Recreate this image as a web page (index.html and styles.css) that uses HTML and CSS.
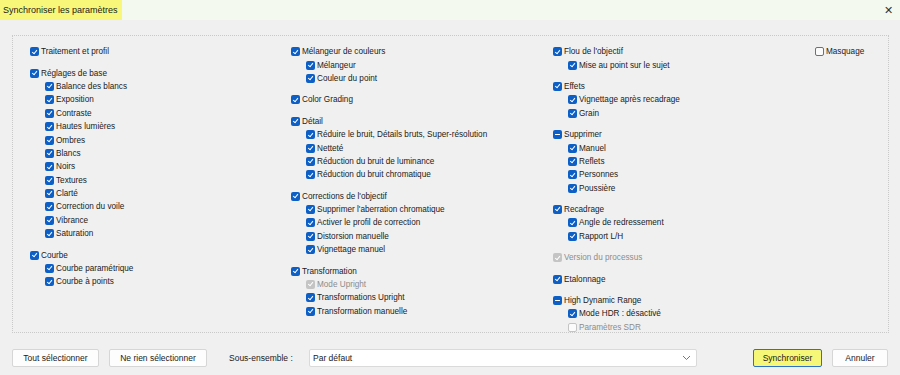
FILE: index.html
```html
<html>

<head>
    <meta http-equiv="Content-Type" content="text/html; charset=UTF-8">
    <link rel="stylesheet" href="styles.css">
</head>

<body>
    <header class="titleBar">
        <span class="title">Synchroniser les paramètres</span>
        <span class="close">&#x2715;</span>
    </header>

    <div class="panel">
        <div class="column">
            <div class="group">
                <div class="item"><span class="box on"></span>Traitement et profil</div>
            </div>
            <div class="group">
                <div class="item"><span class="box on"></span>Réglages de base</div>
                <div class="item sub"><span class="box on"></span>Balance des blancs</div>
                <div class="item sub"><span class="box on"></span>Exposition</div>
                <div class="item sub"><span class="box on"></span>Contraste</div>
                <div class="item sub"><span class="box on"></span>Hautes lumières</div>
                <div class="item sub"><span class="box on"></span>Ombres</div>
                <div class="item sub"><span class="box on"></span>Blancs</div>
                <div class="item sub"><span class="box on"></span>Noirs</div>
                <div class="item sub"><span class="box on"></span>Textures</div>
                <div class="item sub"><span class="box on"></span>Clarté</div>
                <div class="item sub"><span class="box on"></span>Correction du voile</div>
                <div class="item sub"><span class="box on"></span>Vibrance</div>
                <div class="item sub"><span class="box on"></span>Saturation</div>
            </div>
            <div class="group">
                <div class="item"><span class="box on"></span>Courbe</div>
                <div class="item sub"><span class="box on"></span>Courbe paramétrique</div>
                <div class="item sub"><span class="box on"></span>Courbe à points</div>
            </div>
        </div>

        <div class="column">
            <div class="group">
                <div class="item"><span class="box on"></span>Mélangeur de couleurs</div>
                <div class="item sub"><span class="box on"></span>Mélangeur</div>
                <div class="item sub"><span class="box on"></span>Couleur du point</div>
            </div>
            <div class="group">
                <div class="item"><span class="box on"></span>Color Grading</div>
            </div>
            <div class="group">
                <div class="item"><span class="box on"></span>Détail</div>
                <div class="item sub"><span class="box on"></span>Réduire le bruit, Détails bruts, Super-résolution</div>
                <div class="item sub"><span class="box on"></span>Netteté</div>
                <div class="item sub"><span class="box on"></span>Réduction du bruit de luminance</div>
                <div class="item sub"><span class="box on"></span>Réduction du bruit chromatique</div>
            </div>
            <div class="group">
                <div class="item"><span class="box on"></span>Corrections de l'objectif</div>
                <div class="item sub"><span class="box on"></span>Supprimer l'aberration chromatique</div>
                <div class="item sub"><span class="box on"></span>Activer le profil de correction</div>
                <div class="item sub"><span class="box on"></span>Distorsion manuelle</div>
                <div class="item sub"><span class="box on"></span>Vignettage manuel</div>
            </div>
            <div class="group">
                <div class="item"><span class="box on"></span>Transformation</div>
                <div class="item sub disabled"><span class="box on"></span>Mode Upright</div>
                <div class="item sub"><span class="box on"></span>Transformations Upright</div>
                <div class="item sub"><span class="box on"></span>Transformation manuelle</div>
            </div>
        </div>

        <div class="column">
            <div class="group">
                <div class="item"><span class="box on"></span>Flou de l'objectif</div>
                <div class="item sub"><span class="box on"></span>Mise au point sur le sujet</div>
            </div>
            <div class="group">
                <div class="item"><span class="box on"></span>Effets</div>
                <div class="item sub"><span class="box on"></span>Vignettage après recadrage</div>
                <div class="item sub"><span class="box on"></span>Grain</div>
            </div>
            <div class="group">
                <div class="item"><span class="box mixed"></span>Supprimer</div>
                <div class="item sub"><span class="box on"></span>Manuel</div>
                <div class="item sub"><span class="box on"></span>Reflets</div>
                <div class="item sub"><span class="box on"></span>Personnes</div>
                <div class="item sub"><span class="box on"></span>Poussière</div>
            </div>
            <div class="group">
                <div class="item"><span class="box on"></span>Recadrage</div>
                <div class="item sub"><span class="box on"></span>Angle de redressement</div>
                <div class="item sub"><span class="box on"></span>Rapport L/H</div>
            </div>
            <div class="group">
                <div class="item disabled"><span class="box on"></span>Version du processus</div>
            </div>
            <div class="group">
                <div class="item"><span class="box on"></span>Etalonnage</div>
            </div>
            <div class="group">
                <div class="item"><span class="box mixed"></span>High Dynamic Range</div>
                <div class="item sub"><span class="box on"></span>Mode HDR : désactivé</div>
                <div class="item sub disabled"><span class="box"></span>Paramètres SDR</div>
            </div>
        </div>

        <div class="column">
            <div class="group">
                <div class="item"><span class="box"></span>Masquage</div>
            </div>
        </div>
    </div>

    <footer class="actions">
        <button class="selectAll">Tout sélectionner</button>
        <button class="selectNone">Ne rien sélectionner</button>
        <span class="subsetLabel">Sous-ensemble :</span>
        <div class="select">
            <span>Par défaut</span>
            <svg width="9" height="6" viewBox="0 0 9 6"><path d="M1 1 L4.5 4.5 L8 1" fill="none" stroke="#777" stroke-width="1"/></svg>
        </div>
        <button class="primary">Synchroniser</button>
        <button class="cancel">Annuler</button>
    </footer>
</body>

</html>
```

FILE: styles.css
```css
body {
    margin: 0;
    width: 900px;
    height: 375px;
    background: #f0f0f0;
    font-family: "Liberation Sans", Arial, sans-serif;
    font-size: 8.2px;
    color: #1a1a1a;
    overflow: hidden;
}

.titleBar {
    height: 20px;
    display: flex;
    align-items: stretch;
    justify-content: space-between;
    background: #f3f9ef;
}

.title {
    background: #f8f77a;
    padding: 0 4px 0 3px;
    line-height: 20px;
    font-size: 9px;
}

.close {
    font-size: 11px;
    line-height: 20px;
    padding-right: 7px;
    color: #333;
}

.panel {
    margin: 15px 11px 0 12px;
    height: 298px;
    border: 1px dotted #c9c9c9;
    box-sizing: border-box;
    padding: 9px 0 0 17px;
    display: grid;
    grid-template-columns: 261px 262px 262px 1fr;
}

.group {
    margin-bottom: 8px;
}

.item {
    height: 13.4px;
    display: flex;
    align-items: center;
    white-space: nowrap;
}

.item.sub {
    padding-left: 15px;
}

.item.disabled {
    color: #8c8c8c;
}

.box {
    width: 9px;
    height: 9px;
    box-sizing: border-box;
    border: 1px solid #707070;
    border-radius: 2px;
    background: #fbfbfb;
    margin-right: 2px;
    flex: none;
    position: relative;
}

.box.on,
.box.mixed {
    border: none;
    background: #0d5fc6;
}

.box.on::after {
    content: "";
    position: absolute;
    left: 2.6px;
    top: 1.4px;
    width: 2.2px;
    height: 4.2px;
    border: solid #fff;
    border-width: 0 1px 1px 0;
    transform: rotate(40deg);
}

.box.mixed::after {
    content: "";
    position: absolute;
    left: 2px;
    top: 4px;
    width: 5px;
    height: 1px;
    background: #fff;
}

.disabled .box.on {
    background: #c4c4c4;
}

.disabled .box {
    border-color: #c4c4c4;
}

.actions {
    display: flex;
    align-items: center;
    margin: 16px 12px 0 12px;
    height: 18px;
}

button {
    font-family: inherit;
    font-size: 8.5px;
    color: #1a1a1a;
    height: 18px;
    padding: 0;
    background: #fdfdfd;
    border: 1px solid #d6d6d6;
    border-radius: 2px;
    margin-right: 10px;
}

.selectAll {
    width: 87px;
}

.selectNone {
    width: 98px;
}

.subsetLabel {
    margin-left: 12px;
    width: 80px;
    font-size: 8.5px;
}

.select {
    width: 388px;
    height: 18px;
    box-sizing: border-box;
    background: #fff;
    border: 1px solid #dadada;
    border-radius: 2px;
    display: flex;
    align-items: center;
    justify-content: space-between;
    padding: 0 5px 0 3px;
    margin-right: 56px;
    font-size: 8.5px;
}

button.primary {
    background: #f6f777;
    border: 1px solid #2b6fd1;
    width: 69px;
}

button.cancel {
    width: 56px;
    margin-right: 0;
}
```
